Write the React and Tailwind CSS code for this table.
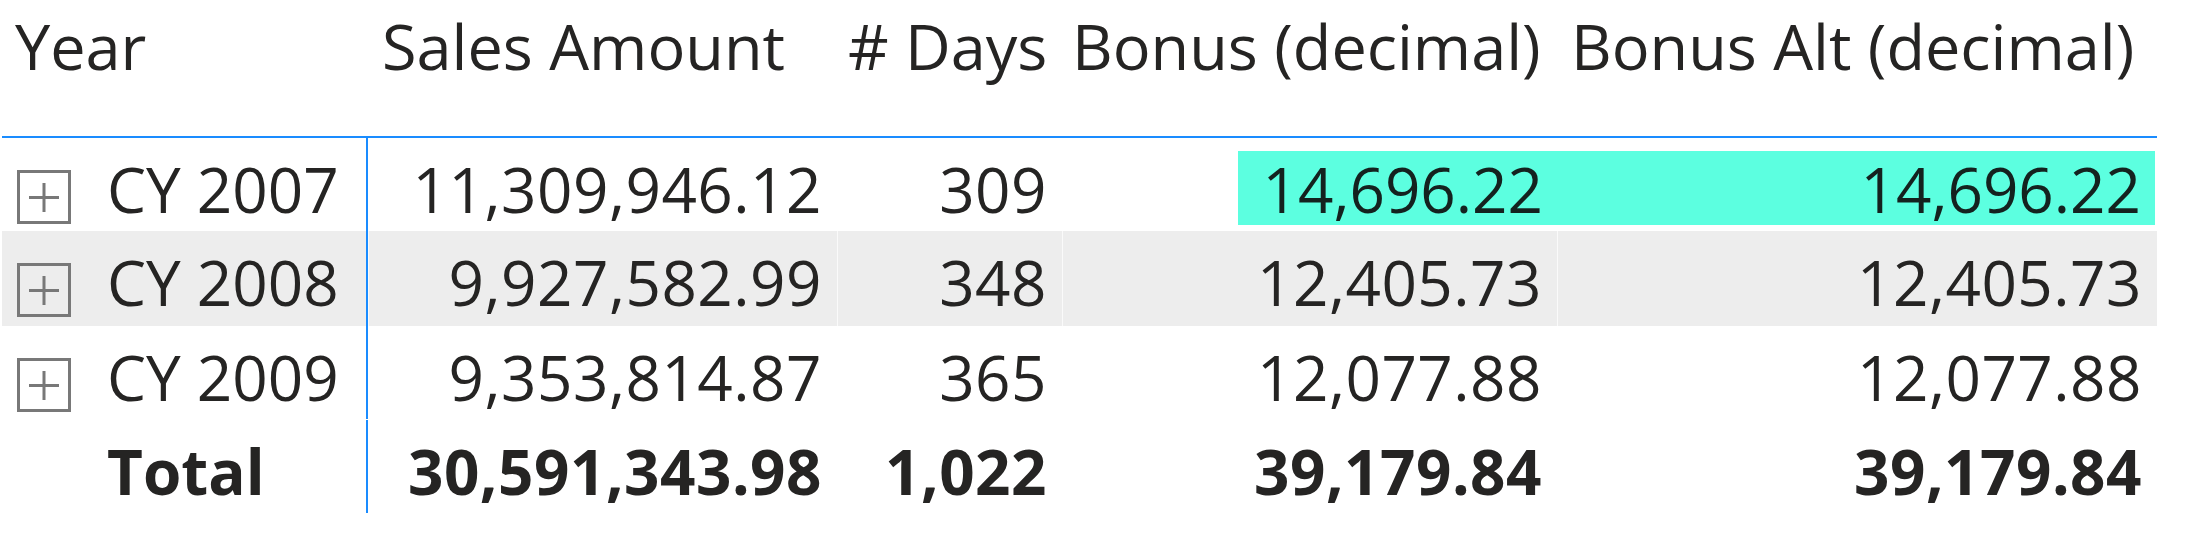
const rows = [
  { year: 'CY 2007', sales: '11,309,946.12', days: '309', bonus: '14,696.22', bonusAlt: '14,696.22', hot: true, h: 'h-[93px]' },
  { year: 'CY 2008', sales: '9,927,582.99', days: '348', bonus: '12,405.73', bonusAlt: '12,405.73', shaded: true, h: 'h-[95px]' },
  { year: 'CY 2009', sales: '9,353,814.87', days: '365', bonus: '12,077.88', bonusAlt: '12,077.88', h: 'h-[93px]' },
];

const total = { sales: '30,591,343.98', days: '1,022', bonus: '39,179.84', bonusAlt: '39,179.84' };

function ExpandBox() {
  return (
    <svg width="54" height="54" viewBox="0 0 54 54" className="shrink-0 mt-[32px]">
      <rect x="1.5" y="1.5" width="51" height="51" fill="none" stroke="#787878" strokeWidth="3" />
      <path d="M12 27.5H42M27 13V42" stroke="#787878" strokeWidth="3" />
    </svg>
  );
}

function ValueCell({ width, value, highlight, noSep }) {
  return (
    <div className={`${width} h-full pt-[13px] ${noSep ? '' : 'border-l border-white/70'}`}>
      {highlight ? (
        <div className={`h-[74px] bg-[#5cffe0] text-[#14221f] text-right pr-[14px] leading-[76px] ${highlight}`}>
          {value}
        </div>
      ) : (
        <div className="text-right pr-[15px] leading-[76px] tracking-[0.5px]">{value}</div>
      )}
    </div>
  );
}

export default function App() {
  return (
    <div className="w-[2191px] h-[548px] bg-white font-['Open_Sans',sans-serif] text-[62px] text-[#252423] pl-[2px]">

      {/* Header */}
      <div className="flex h-[138px] w-[2155px] border-b-2 border-[#1a8cff] leading-[86px] pt-[3px] text-[63px]">
        <div className="w-[366px] pl-[13px]">Year</div>
        <div className="w-[469px] pl-[14px]">Sales Amount</div>
        <div className="w-[225px] pl-[11px] whitespace-nowrap"># Days</div>
        <div className="w-[495px] pl-[10px] whitespace-nowrap">Bonus (decimal)</div>
        <div className="w-[600px] pl-[14px] whitespace-nowrap">Bonus Alt (decimal)</div>
      </div>

      {/* Body */}
      {rows.map((r) => (
        <div key={r.year} className={`flex w-[2155px] ${r.h} ${r.shaded ? 'bg-[#ededed]' : ''}`}>
          <div className="w-[366px] h-full flex items-start pl-[15px] border-r-2 border-[#1a8cff]">
            <ExpandBox />
            <span className="ml-[36px] pt-[13px] leading-[76px] whitespace-nowrap">{r.year}</span>
          </div>
          <ValueCell width="w-[469px]" value={r.sales} />
          <ValueCell width="w-[225px]" value={r.days} />
          <ValueCell width="w-[495px]" value={r.bonus} highlight={r.hot ? 'ml-[175px]' : null} />
          <ValueCell width="w-[600px]" value={r.bonusAlt} highlight={r.hot ? 'mr-[2px]' : null} noSep={r.hot} />
        </div>
      ))}

      {/* Total */}
      <div className="flex w-[2155px] h-[93px] mt-[1px] font-bold">
        <div className="w-[366px] h-full flex items-start pl-[15px] border-r-2 border-[#1a8cff]">
          <div className="w-[54px] shrink-0" />
          <span className="ml-[36px] pt-[13px] leading-[76px]">Total</span>
        </div>
        <ValueCell width="w-[469px]" value={total.sales} />
        <ValueCell width="w-[225px]" value={total.days} />
        <ValueCell width="w-[495px]" value={total.bonus} />
        <ValueCell width="w-[600px]" value={total.bonusAlt} />
      </div>
    </div>
  );
}
